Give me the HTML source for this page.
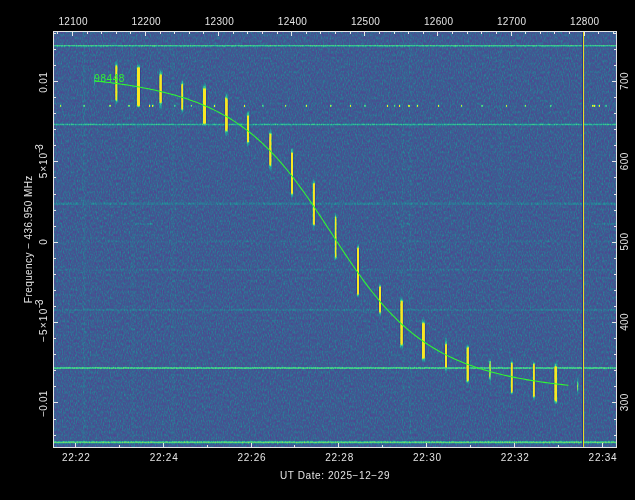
<!DOCTYPE html><html><head><meta charset="utf-8"><style>html,body{margin:0;padding:0;background:#000;width:635px;height:500px;overflow:hidden}svg{display:block}</style></head><body><svg width="635" height="500" viewBox="0 0 635 500">
<defs>
<filter id="spec" x="53" y="31" width="563" height="416" filterUnits="userSpaceOnUse" color-interpolation-filters="sRGB">
<feTurbulence type="fractalNoise" baseFrequency="0.85 0.35" numOctaves="2" seed="7" result="n"/>
<feColorMatrix in="n" type="matrix" values="0.38 0 0 0 0.11  0.38 0 0 0 0.11  0.38 0 0 0 0.11  0 0 0 0 1" result="gn"/>
<feGaussianBlur in="gn" stdDeviation="0.4" result="gb"/>
<feGaussianBlur in="SourceGraphic" stdDeviation="0.4" result="sb"/>
<feComposite in="gb" in2="sb" operator="arithmetic" k1="0" k2="1" k3="1" k4="0" result="sum"/>
<feComponentTransfer in="sum">
<feFuncR type="table" tableValues="0.314 0.345 0.314 0.243 0.176 0.149 0.216 0.353 0.588 0.824 0.980"/>
<feFuncG type="table" tableValues="0.176 0.216 0.275 0.361 0.478 0.588 0.745 0.831 0.871 0.894 0.910"/>
<feFuncB type="table" tableValues="0.510 0.557 0.569 0.573 0.596 0.608 0.580 0.471 0.314 0.176 0.137"/>
<feFuncA type="linear" slope="0" intercept="1"/>
</feComponentTransfer>
</filter>
<linearGradient id="tg" x1="0" y1="0" x2="0" y2="1"><stop offset="0" stop-color="#fff" stop-opacity="0"/><stop offset="0.5" stop-color="#fff" stop-opacity="1"/><stop offset="1" stop-color="#fff" stop-opacity="0"/></linearGradient>
</defs>
<defs><linearGradient id="sg0" x1="0" y1="0" x2="0" y2="1"><stop offset="0" stop-color="rgb(0,0,0)"/><stop offset="0.100" stop-color="rgb(76,76,76)"/><stop offset="0.167" stop-color="rgb(255,255,255)"/><stop offset="0.856" stop-color="rgb(255,255,255)"/><stop offset="0.922" stop-color="rgb(76,76,76)"/><stop offset="1" stop-color="rgb(0,0,0)"/></linearGradient><linearGradient id="sg1" x1="0" y1="0" x2="0" y2="1"><stop offset="0" stop-color="rgb(0,0,0)"/><stop offset="0.078" stop-color="rgb(76,76,76)"/><stop offset="0.144" stop-color="rgb(255,255,255)"/><stop offset="0.911" stop-color="rgb(255,255,255)"/><stop offset="0.978" stop-color="rgb(76,76,76)"/><stop offset="1" stop-color="rgb(0,0,0)"/></linearGradient><linearGradient id="sg2" x1="0" y1="0" x2="0" y2="1"><stop offset="0" stop-color="rgb(0,0,0)"/><stop offset="0.118" stop-color="rgb(76,76,76)"/><stop offset="0.186" stop-color="rgb(255,255,255)"/><stop offset="0.750" stop-color="rgb(255,255,255)"/><stop offset="0.818" stop-color="rgb(76,76,76)"/><stop offset="1" stop-color="rgb(0,0,0)"/></linearGradient><linearGradient id="sg3" x1="0" y1="0" x2="0" y2="1"><stop offset="0" stop-color="rgb(0,0,0)"/><stop offset="0.111" stop-color="rgb(76,76,76)"/><stop offset="0.194" stop-color="rgb(255,255,255)"/><stop offset="0.792" stop-color="rgb(255,255,255)"/><stop offset="0.875" stop-color="rgb(76,76,76)"/><stop offset="1" stop-color="rgb(0,0,0)"/></linearGradient><linearGradient id="sg4" x1="0" y1="0" x2="0" y2="1"><stop offset="0" stop-color="rgb(0,0,0)"/><stop offset="0.124" stop-color="rgb(76,76,76)"/><stop offset="0.191" stop-color="rgb(255,255,255)"/><stop offset="0.880" stop-color="rgb(255,255,255)"/><stop offset="0.947" stop-color="rgb(76,76,76)"/><stop offset="1" stop-color="rgb(0,0,0)"/></linearGradient><linearGradient id="sg5" x1="0" y1="0" x2="0" y2="1"><stop offset="0" stop-color="rgb(0,0,0)"/><stop offset="0.111" stop-color="rgb(76,76,76)"/><stop offset="0.178" stop-color="rgb(255,255,255)"/><stop offset="0.822" stop-color="rgb(255,255,255)"/><stop offset="0.889" stop-color="rgb(76,76,76)"/><stop offset="1" stop-color="rgb(0,0,0)"/></linearGradient><linearGradient id="sg6" x1="0" y1="0" x2="0" y2="1"><stop offset="0" stop-color="rgb(0,0,0)"/><stop offset="0.118" stop-color="rgb(76,76,76)"/><stop offset="0.197" stop-color="rgb(255,255,255)"/><stop offset="0.789" stop-color="rgb(255,255,255)"/><stop offset="0.868" stop-color="rgb(76,76,76)"/><stop offset="1" stop-color="rgb(0,0,0)"/></linearGradient><linearGradient id="sg7" x1="0" y1="0" x2="0" y2="1"><stop offset="0" stop-color="rgb(0,0,0)"/><stop offset="0.107" stop-color="rgb(76,76,76)"/><stop offset="0.175" stop-color="rgb(255,255,255)"/><stop offset="0.814" stop-color="rgb(255,255,255)"/><stop offset="0.882" stop-color="rgb(76,76,76)"/><stop offset="1" stop-color="rgb(0,0,0)"/></linearGradient><linearGradient id="sg8" x1="0" y1="0" x2="0" y2="1"><stop offset="0" stop-color="rgb(0,0,0)"/><stop offset="0.088" stop-color="rgb(76,76,76)"/><stop offset="0.146" stop-color="rgb(255,255,255)"/><stop offset="0.862" stop-color="rgb(255,255,255)"/><stop offset="0.919" stop-color="rgb(76,76,76)"/><stop offset="1" stop-color="rgb(0,0,0)"/></linearGradient><linearGradient id="sg9" x1="0" y1="0" x2="0" y2="1"><stop offset="0" stop-color="rgb(0,0,0)"/><stop offset="0.087" stop-color="rgb(76,76,76)"/><stop offset="0.144" stop-color="rgb(255,255,255)"/><stop offset="0.858" stop-color="rgb(255,255,255)"/><stop offset="0.915" stop-color="rgb(76,76,76)"/><stop offset="1" stop-color="rgb(0,0,0)"/></linearGradient><linearGradient id="sg10" x1="0" y1="0" x2="0" y2="1"><stop offset="0" stop-color="rgb(0,0,0)"/><stop offset="0.080" stop-color="rgb(76,76,76)"/><stop offset="0.140" stop-color="rgb(255,255,255)"/><stop offset="0.870" stop-color="rgb(255,255,255)"/><stop offset="0.930" stop-color="rgb(76,76,76)"/><stop offset="1" stop-color="rgb(0,0,0)"/></linearGradient><linearGradient id="sg11" x1="0" y1="0" x2="0" y2="1"><stop offset="0" stop-color="rgb(0,0,0)"/><stop offset="0.071" stop-color="rgb(76,76,76)"/><stop offset="0.125" stop-color="rgb(255,255,255)"/><stop offset="0.875" stop-color="rgb(255,255,255)"/><stop offset="0.929" stop-color="rgb(76,76,76)"/><stop offset="1" stop-color="rgb(0,0,0)"/></linearGradient><linearGradient id="sg12" x1="0" y1="0" x2="0" y2="1"><stop offset="0" stop-color="rgb(0,0,0)"/><stop offset="0.111" stop-color="rgb(76,76,76)"/><stop offset="0.194" stop-color="rgb(255,255,255)"/><stop offset="0.778" stop-color="rgb(255,255,255)"/><stop offset="0.861" stop-color="rgb(76,76,76)"/><stop offset="1" stop-color="rgb(0,0,0)"/></linearGradient><linearGradient id="sg13" x1="0" y1="0" x2="0" y2="1"><stop offset="0" stop-color="rgb(0,0,0)"/><stop offset="0.074" stop-color="rgb(76,76,76)"/><stop offset="0.130" stop-color="rgb(255,255,255)"/><stop offset="0.870" stop-color="rgb(255,255,255)"/><stop offset="0.926" stop-color="rgb(76,76,76)"/><stop offset="1" stop-color="rgb(0,0,0)"/></linearGradient><linearGradient id="sg14" x1="0" y1="0" x2="0" y2="1"><stop offset="0" stop-color="rgb(0,0,0)"/><stop offset="0.089" stop-color="rgb(76,76,76)"/><stop offset="0.156" stop-color="rgb(255,255,255)"/><stop offset="0.856" stop-color="rgb(255,255,255)"/><stop offset="0.922" stop-color="rgb(76,76,76)"/><stop offset="1" stop-color="rgb(0,0,0)"/></linearGradient><linearGradient id="sg15" x1="0" y1="0" x2="0" y2="1"><stop offset="0" stop-color="rgb(0,0,0)"/><stop offset="0.184" stop-color="rgb(76,76,76)"/><stop offset="0.263" stop-color="rgb(255,255,255)"/><stop offset="0.776" stop-color="rgb(255,255,255)"/><stop offset="0.855" stop-color="rgb(76,76,76)"/><stop offset="1" stop-color="rgb(0,0,0)"/></linearGradient><linearGradient id="sg16" x1="0" y1="0" x2="0" y2="1"><stop offset="0" stop-color="rgb(0,0,0)"/><stop offset="0.084" stop-color="rgb(76,76,76)"/><stop offset="0.153" stop-color="rgb(255,255,255)"/><stop offset="0.833" stop-color="rgb(255,255,255)"/><stop offset="0.902" stop-color="rgb(76,76,76)"/><stop offset="1" stop-color="rgb(0,0,0)"/></linearGradient><linearGradient id="sg17" x1="0" y1="0" x2="0" y2="1"><stop offset="0" stop-color="rgb(0,0,0)"/><stop offset="0.105" stop-color="rgb(76,76,76)"/><stop offset="0.184" stop-color="rgb(255,255,255)"/><stop offset="0.855" stop-color="rgb(255,255,255)"/><stop offset="0.934" stop-color="rgb(76,76,76)"/><stop offset="1" stop-color="rgb(0,0,0)"/></linearGradient><linearGradient id="sg18" x1="0" y1="0" x2="0" y2="1"><stop offset="0" stop-color="rgb(0,0,0)"/><stop offset="0.050" stop-color="rgb(76,76,76)"/><stop offset="0.125" stop-color="rgb(255,255,255)"/><stop offset="0.842" stop-color="rgb(255,255,255)"/><stop offset="0.917" stop-color="rgb(76,76,76)"/><stop offset="1" stop-color="rgb(0,0,0)"/></linearGradient><linearGradient id="sg19" x1="0" y1="0" x2="0" y2="1"><stop offset="0" stop-color="rgb(0,0,0)"/><stop offset="0.102" stop-color="rgb(76,76,76)"/><stop offset="0.170" stop-color="rgb(255,255,255)"/><stop offset="0.873" stop-color="rgb(255,255,255)"/><stop offset="0.941" stop-color="rgb(76,76,76)"/><stop offset="1" stop-color="rgb(0,0,0)"/></linearGradient></defs>
<rect x="0" y="0" width="635" height="500" fill="#000"/>
<g filter="url(#spec)">
<rect x="53" y="31" width="563" height="416" fill="#000"/>
<rect x="82.5" y="31" width="3" height="416" fill="rgb(8,8,8)"/>
<rect x="131.5" y="31" width="3" height="416" fill="rgb(6,6,6)"/>
<rect x="171.5" y="31" width="3" height="416" fill="rgb(6,6,6)"/>
<rect x="401.5" y="31" width="3" height="416" fill="rgb(5,5,5)"/>
<rect x="408.5" y="31" width="3" height="416" fill="rgb(6,6,6)"/>
<rect x="498.5" y="31" width="3" height="416" fill="rgb(5,5,5)"/>
<rect x="135" y="223.2" width="18" height="1.6" fill="rgb(26,26,26)"/>
<rect x="399" y="223.2" width="11" height="1.6" fill="rgb(26,26,26)"/>
<rect x="594" y="223.2" width="22" height="1.6" fill="rgb(20,20,20)"/>
<rect x="585" y="202.89999999999998" width="31" height="1.6" fill="rgb(20,20,20)"/>
<rect x="53" y="45.05" width="563" height="1.5" fill="rgb(87,87,87)"/>
<rect x="53" y="123.70" width="563" height="1.6" fill="rgb(69,69,69)"/>
<rect x="53" y="202.45" width="563" height="2.5" fill="rgb(23,23,23)"/>
<rect x="53" y="240.70" width="563" height="2" fill="rgb(8,8,8)"/>
<rect x="53" y="269.00" width="563" height="2" fill="rgb(11,11,11)"/>
<rect x="53" y="309.00" width="563" height="2" fill="rgb(18,18,18)"/>
<rect x="53" y="367.30" width="563" height="1.4" fill="rgb(117,117,117)"/>
<rect x="53" y="441.30" width="563" height="2" fill="rgb(102,102,102)"/>
<rect x="60.1" y="104.8" width="1.2" height="2" fill="rgb(153,153,153)"/>
<rect x="83.4" y="104.8" width="1.2" height="2" fill="rgb(153,153,153)"/>
<rect x="109.4" y="104.8" width="1.2" height="2" fill="rgb(204,204,204)"/>
<rect x="128.4" y="104.8" width="1.2" height="2" fill="rgb(204,204,204)"/>
<rect x="149.0" y="104.8" width="1.2" height="2" fill="rgb(255,255,255)"/>
<rect x="152.2" y="104.8" width="1.2" height="2" fill="rgb(255,255,255)"/>
<rect x="174.4" y="104.8" width="1.2" height="2" fill="rgb(128,128,128)"/>
<rect x="190.9" y="104.8" width="1.2" height="2" fill="rgb(128,128,128)"/>
<rect x="213.9" y="104.8" width="1.2" height="2" fill="rgb(230,230,230)"/>
<rect x="243.9" y="104.8" width="1.2" height="2" fill="rgb(204,204,204)"/>
<rect x="262.4" y="104.8" width="1.2" height="2" fill="rgb(128,128,128)"/>
<rect x="285.1" y="104.8" width="1.2" height="2" fill="rgb(153,153,153)"/>
<rect x="305.8" y="104.8" width="1.2" height="2" fill="rgb(204,204,204)"/>
<rect x="330.2" y="104.8" width="1.2" height="2" fill="rgb(178,178,178)"/>
<rect x="349.9" y="104.8" width="1.2" height="2" fill="rgb(204,204,204)"/>
<rect x="364.4" y="104.8" width="1.2" height="2" fill="rgb(153,153,153)"/>
<rect x="386.9" y="104.8" width="1.2" height="2" fill="rgb(255,255,255)"/>
<rect x="393.9" y="104.8" width="1.2" height="2" fill="rgb(102,102,102)"/>
<rect x="399.0" y="104.8" width="1.2" height="2" fill="rgb(255,255,255)"/>
<rect x="408.4" y="104.8" width="1.2" height="2" fill="rgb(255,255,255)"/>
<rect x="416.9" y="104.8" width="1.2" height="2" fill="rgb(204,204,204)"/>
<rect x="438.0" y="104.8" width="1.2" height="2" fill="rgb(204,204,204)"/>
<rect x="461.0" y="104.8" width="1.2" height="2" fill="rgb(153,153,153)"/>
<rect x="481.4" y="104.8" width="1.2" height="2" fill="rgb(153,153,153)"/>
<rect x="505.9" y="104.8" width="1.2" height="2" fill="rgb(153,153,153)"/>
<rect x="524.7" y="104.8" width="1.2" height="2" fill="rgb(153,153,153)"/>
<rect x="550.2" y="104.8" width="1.2" height="2" fill="rgb(153,153,153)"/>
<rect x="592.3" y="104.8" width="1.2" height="2" fill="rgb(255,255,255)"/>
<rect x="594.0" y="104.8" width="1.2" height="2" fill="rgb(255,255,255)"/>
<rect x="598.7" y="104.8" width="1.2" height="2" fill="rgb(204,204,204)"/>
<rect x="605.4" y="104.8" width="1.2" height="2" fill="rgb(128,128,128)"/>
<rect x="115.35" y="60" width="2.1" height="45.0" rx="1.05" ry="3" fill="url(#sg0)"/>
<rect x="136.80" y="63" width="3.2" height="45.0" rx="1.60" ry="3" fill="url(#sg1)"/>
<rect x="159.40" y="68" width="2.4" height="44.0" rx="1.20" ry="3" fill="url(#sg2)"/>
<rect x="181.30" y="79" width="2" height="36.0" rx="1.00" ry="3" fill="url(#sg3)"/>
<rect x="202.80" y="82" width="3.2" height="45.0" rx="1.60" ry="3" fill="url(#sg4)"/>
<rect x="225.10" y="92" width="2.6" height="45.0" rx="1.30" ry="3" fill="url(#sg5)"/>
<rect x="246.80" y="110" width="2.4" height="38.0" rx="1.20" ry="3" fill="url(#sg6)"/>
<rect x="269.30" y="128" width="2.2" height="44.0" rx="1.10" ry="3" fill="url(#sg7)"/>
<rect x="290.90" y="147" width="2.2" height="52.0" rx="1.10" ry="3" fill="url(#sg8)"/>
<rect x="312.70" y="178" width="2.2" height="52.0" rx="1.10" ry="3" fill="url(#sg9)"/>
<rect x="334.70" y="212" width="1.8" height="50.0" rx="0.90" ry="3" fill="url(#sg10)"/>
<rect x="357.00" y="243" width="2" height="56.0" rx="1.00" ry="3" fill="url(#sg11)"/>
<rect x="379.00" y="282" width="2" height="36.0" rx="1.00" ry="3" fill="url(#sg12)"/>
<rect x="400.40" y="296" width="2.4" height="54.0" rx="1.20" ry="3" fill="url(#sg13)"/>
<rect x="421.90" y="318" width="3.0" height="45.0" rx="1.50" ry="3" fill="url(#sg14)"/>
<rect x="445.00" y="336" width="2.0" height="38.0" rx="1.00" ry="3" fill="url(#sg15)"/>
<rect x="466.50" y="343" width="2.4" height="43.0" rx="1.20" ry="3" fill="url(#sg16)"/>
<rect x="510.70" y="358" width="2" height="38.0" rx="1.00" ry="3" fill="url(#sg17)"/>
<rect x="532.80" y="361" width="2" height="40.0" rx="1.00" ry="3" fill="url(#sg18)"/>
<rect x="554.40" y="361" width="2.8" height="44.0" rx="1.40" ry="3" fill="url(#sg19)"/>
<rect x="489" y="357" width="2" height="28" fill="url(#tg)" opacity="0.5"/>
<rect x="489.2" y="360.8" width="1.6" height="17" rx="0.8" ry="2" fill="rgb(128,128,128)"/>
<rect x="577" y="375.3" width="1.4" height="21" fill="url(#tg)" opacity="0.5"/>
<rect x="93.9" y="68" width="1.2" height="25" fill="url(#tg)" opacity="0.25"/>
</g>
<path d="M114.85,66.5V99.5M117.95,66.5V99.5M136.30,68.5V105.0M140.50,68.5V105.0M158.90,75.2V102.0M162.30,75.2V102.0M180.80,85.0V108.5M183.80,85.0V108.5M202.30,89.6V122.6M206.50,89.6V122.6M224.60,99.0V130.0M228.20,99.0V130.0M246.30,116.5V141.0M249.70,116.5V141.0M268.80,134.7V164.8M272.00,134.7V164.8M290.40,153.6V192.8M293.60,153.6V192.8M312.20,184.5V223.6M315.40,184.5V223.6M334.20,218.0V256.5M337.00,218.0V256.5M356.50,249.0V293.0M359.50,249.0V293.0M378.50,288.0V311.0M381.50,288.0V311.0M399.90,302.0V344.0M403.30,302.0V344.0M421.40,324.0V357.5M425.40,324.0V357.5M444.50,345.0V366.5M447.50,345.0V366.5M466.00,348.6V379.8M469.40,348.6V379.8M510.20,364.0V391.5M513.20,364.0V391.5M532.30,365.0V395.7M535.30,365.0V395.7M553.90,367.5V400.4M557.70,367.5V400.4" stroke="#26398c" stroke-width="1" opacity="0.55" fill="none"/>
<rect x="582" y="32" width="1" height="415" fill="#1e3290" opacity="0.9"/>
<rect x="583.05" y="32" width="1.0" height="415" fill="#f2e020"/>
<path d="M94.5,80.88 L97.5,81.20 L100.5,81.53 L103.5,81.87 L106.5,82.23 L109.5,82.59 L112.5,82.97 L115.5,83.37 L118.5,83.78 L121.5,84.20 L124.5,84.64 L127.5,85.10 L130.5,85.57 L133.5,86.06 L136.5,86.57 L139.5,87.10 L142.5,87.66 L145.5,88.23 L148.5,88.82 L151.5,89.44 L154.5,90.08 L157.5,90.75 L160.5,91.44 L163.5,92.16 L166.5,92.91 L169.5,93.69 L172.5,94.50 L175.5,95.35 L178.5,96.23 L181.5,97.14 L184.5,98.10 L187.5,99.09 L190.5,100.13 L193.5,101.20 L196.5,102.33 L199.5,103.50 L202.5,104.72 L205.5,105.99 L208.5,107.32 L211.5,108.70 L214.5,110.14 L217.5,111.64 L220.5,113.21 L223.5,114.84 L226.5,116.54 L229.5,118.32 L232.5,120.17 L235.5,122.10 L238.5,124.10 L241.5,126.20 L244.5,128.38 L247.5,130.64 L250.5,133.00 L253.5,135.46 L256.5,138.01 L259.5,140.66 L262.5,143.42 L265.5,146.27 L268.5,149.24 L271.5,152.31 L274.5,155.48 L277.5,158.77 L280.5,162.16 L283.5,165.66 L286.5,169.27 L289.5,172.98 L292.5,176.80 L295.5,180.71 L298.5,184.72 L301.5,188.82 L304.5,193.01 L307.5,197.27 L310.5,201.61 L313.5,206.01 L316.5,210.47 L319.5,214.98 L322.5,219.53 L325.5,224.10 L328.5,228.70 L331.5,233.31 L334.5,237.91 L337.5,242.51 L340.5,247.08 L343.5,251.63 L346.5,256.13 L349.5,260.58 L352.5,264.98 L355.5,269.31 L358.5,273.57 L361.5,277.74 L364.5,281.83 L367.5,285.83 L370.5,289.74 L373.5,293.54 L376.5,297.24 L379.5,300.84 L382.5,304.33 L385.5,307.71 L388.5,310.98 L391.5,314.15 L394.5,317.21 L397.5,320.16 L400.5,323.01 L403.5,325.75 L406.5,328.39 L409.5,330.93 L412.5,333.38 L415.5,335.73 L418.5,337.99 L421.5,340.16 L424.5,342.24 L427.5,344.24 L430.5,346.16 L433.5,348.00 L436.5,349.77 L439.5,351.46 L442.5,353.09 L445.5,354.65 L448.5,356.14 L451.5,357.58 L454.5,358.95 L457.5,360.27 L460.5,361.54 L463.5,362.76 L466.5,363.92 L469.5,365.04 L472.5,366.11 L475.5,367.14 L478.5,368.13 L481.5,369.08 L484.5,370.00 L487.5,370.87 L490.5,371.71 L493.5,372.52 L496.5,373.30 L499.5,374.05 L502.5,374.76 L505.5,375.45 L508.5,376.12 L511.5,376.76 L514.5,377.37 L517.5,377.96 L520.5,378.53 L523.5,379.08 L526.5,379.61 L529.5,380.12 L532.5,380.61 L535.5,381.08 L538.5,381.53 L541.5,381.97 L544.5,382.39 L547.5,382.80 L550.5,383.20 L553.5,383.57 L556.5,383.94 L559.5,384.29 L562.5,384.63 L565.5,384.96 L568.5,385.28" fill="none" stroke="#30f830" stroke-width="1.05" stroke-linejoin="round"/>
<g style="will-change:transform"><text x="94.3" y="81.8" font-family="Liberation Sans" font-size="10" fill="#30f530" textLength="30" lengthAdjust="spacing">98448</text></g>
<rect x="53.5" y="31.5" width="563" height="416" fill="none" stroke="#e6e6e6" stroke-width="1"/>
<path d="M57.5,32v2 M72.5,32v4 M87.5,32v2 M101.5,32v2 M116.5,32v2 M130.5,32v2 M145.5,32v4 M160.5,32v2 M174.5,32v2 M189.5,32v2 M203.5,32v2 M218.5,32v4 M233.5,32v2 M247.5,32v2 M262.5,32v2 M277.5,32v2 M291.5,32v4 M306.5,32v2 M320.5,32v2 M335.5,32v2 M350.5,32v2 M364.5,32v4 M379.5,32v2 M394.5,32v2 M408.5,32v2 M423.5,32v2 M437.5,32v4 M452.5,32v2 M467.5,32v2 M481.5,32v2 M496.5,32v2 M511.5,32v4 M525.5,32v2 M540.5,32v2 M554.5,32v2 M569.5,32v2 M584.5,32v4 M598.5,32v2 M613.5,32v2 M75.5,447v-4 M119.5,447v-2 M163.5,447v-4 M207.5,447v-2 M251.5,447v-4 M294.5,447v-2 M338.5,447v-4 M382.5,447v-2 M426.5,447v-4 M470.5,447v-2 M514.5,447v-4 M558.5,447v-2 M602.5,447v-4 M54,33.5h2 M616,33.5h-2 M54,49.5h2 M616,49.5h-2 M54,65.5h2 M616,65.5h-2 M54,81.5h4 M616,81.5h-4 M54,97.5h2 M616,97.5h-2 M54,113.5h2 M616,113.5h-2 M54,129.5h2 M616,129.5h-2 M54,145.5h2 M616,145.5h-2 M54,161.5h4 M616,161.5h-4 M54,177.5h2 M616,177.5h-2 M54,194.5h2 M616,194.5h-2 M54,210.5h2 M616,210.5h-2 M54,226.5h2 M616,226.5h-2 M54,242.5h4 M616,242.5h-4 M54,258.5h2 M616,258.5h-2 M54,274.5h2 M616,274.5h-2 M54,290.5h2 M616,290.5h-2 M54,306.5h2 M616,306.5h-2 M54,322.5h4 M616,322.5h-4 M54,338.5h2 M616,338.5h-2 M54,354.5h2 M616,354.5h-2 M54,370.5h2 M616,370.5h-2 M54,386.5h2 M616,386.5h-2 M54,402.5h4 M616,402.5h-4 M54,419.5h2 M616,419.5h-2 M54,435.5h2 M616,435.5h-2" stroke="#e6e6e6" stroke-width="1" fill="none"/>
<g style="will-change:transform">
<text x="73.0" y="25" text-anchor="middle" font-family="Liberation Sans" font-size="10" fill="#e4e4e4" lengthAdjust="spacing" textLength="29">12100</text>
<text x="146.1" y="25" text-anchor="middle" font-family="Liberation Sans" font-size="10" fill="#e4e4e4" lengthAdjust="spacing" textLength="29">12200</text>
<text x="219.2" y="25" text-anchor="middle" font-family="Liberation Sans" font-size="10" fill="#e4e4e4" lengthAdjust="spacing" textLength="29">12300</text>
<text x="292.3" y="25" text-anchor="middle" font-family="Liberation Sans" font-size="10" fill="#e4e4e4" lengthAdjust="spacing" textLength="29">12400</text>
<text x="365.4" y="25" text-anchor="middle" font-family="Liberation Sans" font-size="10" fill="#e4e4e4" lengthAdjust="spacing" textLength="29">12500</text>
<text x="438.5" y="25" text-anchor="middle" font-family="Liberation Sans" font-size="10" fill="#e4e4e4" lengthAdjust="spacing" textLength="29">12600</text>
<text x="511.5" y="25" text-anchor="middle" font-family="Liberation Sans" font-size="10" fill="#e4e4e4" lengthAdjust="spacing" textLength="29">12700</text>
<text x="584.6" y="25" text-anchor="middle" font-family="Liberation Sans" font-size="10" fill="#e4e4e4" lengthAdjust="spacing" textLength="29">12800</text>
<text x="75.9" y="461" text-anchor="middle" font-family="Liberation Sans" font-size="10" fill="#e4e4e4" lengthAdjust="spacing" textLength="28">22:22</text>
<text x="163.7" y="461" text-anchor="middle" font-family="Liberation Sans" font-size="10" fill="#e4e4e4" lengthAdjust="spacing" textLength="28">22:24</text>
<text x="251.5" y="461" text-anchor="middle" font-family="Liberation Sans" font-size="10" fill="#e4e4e4" lengthAdjust="spacing" textLength="28">22:26</text>
<text x="339.2" y="461" text-anchor="middle" font-family="Liberation Sans" font-size="10" fill="#e4e4e4" lengthAdjust="spacing" textLength="28">22:28</text>
<text x="427.0" y="461" text-anchor="middle" font-family="Liberation Sans" font-size="10" fill="#e4e4e4" lengthAdjust="spacing" textLength="28">22:30</text>
<text x="514.8" y="461" text-anchor="middle" font-family="Liberation Sans" font-size="10" fill="#e4e4e4" lengthAdjust="spacing" textLength="28">22:32</text>
<text x="602.6" y="461" text-anchor="middle" font-family="Liberation Sans" font-size="10" fill="#e4e4e4" lengthAdjust="spacing" textLength="28">22:34</text>
<text x="334.7" y="479" text-anchor="middle" font-family="Liberation Sans" font-size="10" fill="#e4e4e4" lengthAdjust="spacing" textLength="109.5">UT Date: 2025−12−29</text>
<text transform="translate(628.3,81.2) rotate(-90)" text-anchor="middle" font-family="Liberation Sans" font-size="10" fill="#e4e4e4" lengthAdjust="spacing" textLength="17.5">700</text>
<text transform="translate(628.3,161.5) rotate(-90)" text-anchor="middle" font-family="Liberation Sans" font-size="10" fill="#e4e4e4" lengthAdjust="spacing" textLength="17.5">600</text>
<text transform="translate(628.3,241.8) rotate(-90)" text-anchor="middle" font-family="Liberation Sans" font-size="10" fill="#e4e4e4" lengthAdjust="spacing" textLength="17.5">500</text>
<text transform="translate(628.3,322.1) rotate(-90)" text-anchor="middle" font-family="Liberation Sans" font-size="10" fill="#e4e4e4" lengthAdjust="spacing" textLength="17.5">400</text>
<text transform="translate(628.3,402.4) rotate(-90)" text-anchor="middle" font-family="Liberation Sans" font-size="10" fill="#e4e4e4" lengthAdjust="spacing" textLength="17.5">300</text>
<text transform="translate(47,82.5) rotate(-90)" text-anchor="middle" font-family="Liberation Sans" font-size="10" fill="#e4e4e4" lengthAdjust="spacing" textLength="20.5">0.01</text>
<text transform="translate(47,242) rotate(-90)" text-anchor="middle" font-family="Liberation Sans" font-size="10" fill="#e4e4e4" lengthAdjust="spacing">0</text>
<text transform="translate(47,403.7) rotate(-90)" text-anchor="middle" font-family="Liberation Sans" font-size="10" fill="#e4e4e4" lengthAdjust="spacing" textLength="26">−0.01</text>
<text transform="translate(47.2,165.6) rotate(-90)" text-anchor="middle" font-family="Liberation Sans" font-size="10" fill="#e4e4e4" lengthAdjust="spacing" textLength="25.2">5×10</text>
<text transform="translate(42.5,148.4) rotate(-90)" text-anchor="middle" font-family="Liberation Sans" font-size="10" fill="#e4e4e4" lengthAdjust="spacing" font-size="7" textLength="8.6">−3</text>
<text transform="translate(47.2,325.4) rotate(-90)" text-anchor="middle" font-family="Liberation Sans" font-size="10" fill="#e4e4e4" lengthAdjust="spacing" textLength="33.2">−5×10</text>
<text transform="translate(42.5,303.8) rotate(-90)" text-anchor="middle" font-family="Liberation Sans" font-size="10" fill="#e4e4e4" lengthAdjust="spacing" font-size="7" textLength="8.6">−3</text>
<text transform="translate(31.8,239.4) rotate(-90)" text-anchor="middle" font-family="Liberation Sans" font-size="10" fill="#e4e4e4" lengthAdjust="spacing" textLength="127.5">Frequency − 436.950 MHz</text>
</g>
</svg></body></html>
